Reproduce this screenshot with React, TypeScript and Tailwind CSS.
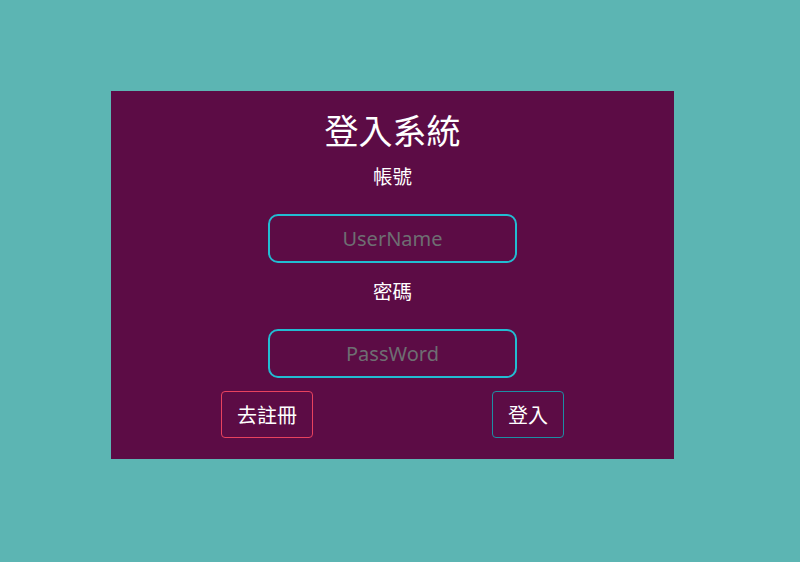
import React from "react";

export default function App() {
  const cjk = { fontFamily: '"Noto Sans CJK TC", "Noto Sans", sans-serif' };
  const latin = { fontFamily: '"Noto Sans", "Noto Sans CJK TC", sans-serif' };
  return (
    <div className="w-[800px] h-[562px] bg-[#5cb5b3] pt-[91px] pl-[111px]" style={cjk}>
      <div className="w-[563px] h-[368px] bg-[#5c0c45] flex flex-col items-center text-white">
        <h1 className="mt-[15px] text-[34px] leading-[48px] font-normal">登入系統</h1>
        <label className="mt-[7px] text-[19.5px] leading-[30px]">帳號</label>
        <input
          placeholder="UserName"
          className="mt-[23px] w-[249px] h-[49px] box-border border-2 border-[#22bcd2] rounded-[10px] bg-transparent text-center text-[20px] placeholder:text-[#6e6e72] outline-none"
          style={latin}
        />
        <label className="mt-[13px] text-[19.5px] leading-[30px]">密碼</label>
        <input
          placeholder="PassWord"
          className="mt-[23px] w-[249px] h-[49px] box-border border-2 border-[#22bcd2] rounded-[10px] bg-transparent text-center text-[20px] placeholder:text-[#6e6e72] outline-none"
          style={latin}
        />
        <div className="mt-[13px] w-full px-[110px] flex justify-between">
          <button className="h-[47px] px-[15px] border border-[#e8425e] rounded-[4px] text-[20px] text-white bg-transparent">
            去註冊
          </button>
          <button className="h-[47px] px-[15px] border border-[#1d8ea3] rounded-[4px] text-[20px] text-white bg-transparent">
            登入
          </button>
        </div>
      </div>
    </div>
  );
}
